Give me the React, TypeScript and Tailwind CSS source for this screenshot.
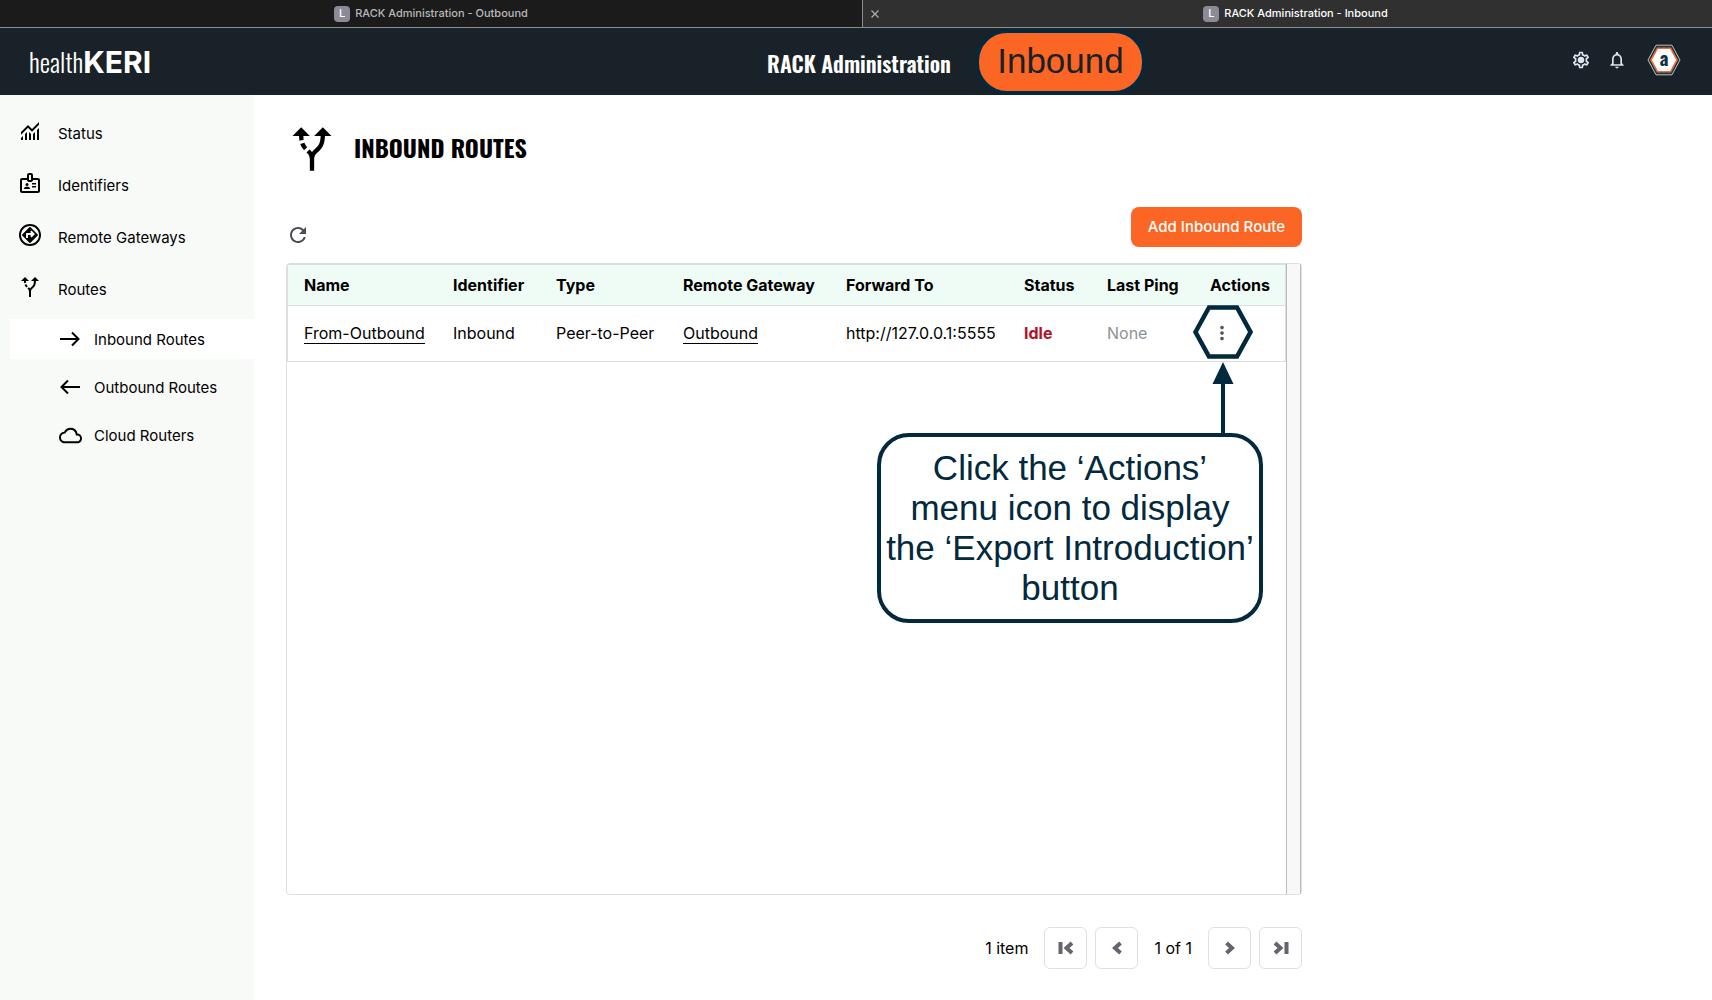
import type { ReactNode } from "react";
import {
  MdAltRoute,
  MdMoreVert,
  MdNotificationsNone,
  MdOutlineAssistantDirection,
  MdOutlineBadge,
  MdOutlineCloud,
  MdOutlineSettings,
  MdRefresh,
} from "react-icons/md";

const narrow = "font-['Oswald','Liberation_Sans_Narrow','Liberation_Sans',sans-serif]";

function TabLabel({ text }: { text: string }) {
  return (
    <span className="flex items-center gap-[5px]">
      <span className="flex h-4 w-4 items-center justify-center rounded bg-[#8b8a96] text-[11px] font-medium text-white">
        L
      </span>
      {text}
    </span>
  );
}

function BrowserTabs() {
  return (
    <div className="flex h-7 border-b border-[#8a8f91] bg-[#1b1b1b] text-[11px] font-medium" role="tablist">
      <button role="tab" aria-selected="false" className="flex w-[862px] shrink items-center justify-center text-[#b9b9b9]">
        <TabLabel text="RACK Administration - Outbound" />
      </button>
      <div className="flex flex-1 items-center border-l border-[#8a8f91] bg-[#303030]">
        <button aria-label="Close tab" className="ml-1 flex w-4 justify-center text-[#b0b0b0]">
          <svg width="8" height="8" viewBox="0 0 8 8" stroke="currentColor" strokeWidth="1.2">
            <path d="M.5.5l7 7M7.5.5l-7 7" />
          </svg>
        </button>
        <button role="tab" aria-selected="true" className="flex flex-1 justify-center pr-1 text-white">
          <TabLabel text="RACK Administration - Inbound" />
        </button>
      </div>
    </div>
  );
}

function SettingsIcon() {
  return (
    <svg width="20" height="20" viewBox="0 0 20 20">
      <MdOutlineSettings size={20} />
      <circle cx="10" cy="10" r="3" fill="currentColor" />
    </svg>
  );
}

function Avatar() {
  return (
    <svg width="34" height="32" viewBox="0 0 34 32">
      <path d="M1 16L9 1.200h16L33 16l-8 14.800H9z" fill="#26333a" stroke="#a9c9c0" strokeWidth="1" />
      <path d="M4 16L10.500 4.200h13L30 16l-6.500 11.800h-13z" fill="#fff" stroke="#f26a3c" strokeWidth="1.600" />
      <text x="17" y="22" textAnchor="middle" fontSize="19" fontWeight="700" fill="#12303f" fontFamily="Oswald, Liberation Sans Narrow, Liberation Sans, sans-serif">
        a
      </text>
    </svg>
  );
}

function Header() {
  return (
    <header className="flex h-[67px] items-center bg-[#1a2229] pr-[31px] pl-[29px] text-white">
      <a href="#home" className="flex flex-1 items-baseline leading-7">
        <span className={`${narrow} text-[26px] font-light`}>health</span>
        <span className="text-[30px] font-bold">KERI</span>
      </a>
      <div className="relative ml-2">
        <h1 className={`${narrow} pt-1 text-[22px] font-semibold`}>RACK Administration</h1>
        <span className="absolute top-1/2 left-full ml-6 flex h-[66px] w-[171px] -translate-y-1/2 items-center justify-center rounded-[32px] border-4 border-[#03293e] bg-[#fc6625] font-['Liberation_Sans',sans-serif] text-[35px] text-[#1a2229]">
          Inbound
        </span>
      </div>
      <div className="flex flex-1 items-center justify-end pb-[3px] text-[#dfe5ee]">
        <button aria-label="Settings" className="mr-4">
          <SettingsIcon />
        </button>
        <button aria-label="Notifications" className="mr-5">
          <MdNotificationsNone size={20} />
        </button>
        <button aria-label="Account">
          <Avatar />
        </button>
      </div>
    </header>
  );
}

function MonitoringIcon() {
  return (
    <svg width="24" height="24" viewBox="0 0 24 24" fill="currentColor">
      <path d="M3 21v-2l2-2v4zm4 0v-6l2-2v8zm4 0v-8l2 2.030V21zm4 0v-5.980l2-2V21zm4 0V11l2-2v12zM3 15.830V13l7-7 4 4 7-7v2.830l-7 7-4-4z" />
    </svg>
  );
}

function ArrowIcon({ left = false }: { left?: boolean }) {
  return (
    <svg width="22" height="16" viewBox="0 0 22 16" fill="none" stroke="currentColor" strokeWidth="2">
      {left ? <path d="M21 8H2.500M9 1.500L2.500 8 9 14.500" /> : <path d="M1 8h18.500M13 1.500L19.500 8 13 14.500" />}
    </svg>
  );
}

function NavItem({ icon, label }: { icon: ReactNode; label: string }) {
  return (
    <a href="#nav" className="flex h-[52px] items-center gap-4 pl-[18px]">
      <span className="flex w-6 justify-center pb-1">{icon}</span>
      <span className="pt-0.5">{label}</span>
    </a>
  );
}

function SubItem({ icon, label, active = false }: { icon: ReactNode; label: string; active?: boolean }) {
  return (
    <a
      href="#route"
      aria-current={active ? "page" : undefined}
      className={`ml-2.5 flex h-10 items-center gap-3 pl-12 ${active ? "bg-white" : ""}`}
    >
      <span className="flex w-6 justify-center">{icon}</span>
      <span className="pt-0.5">{label}</span>
    </a>
  );
}

function Sidebar() {
  return (
    <nav className="w-[254px] shrink-0 bg-[#f8faf8] pt-3 text-[15px]">
      <NavItem icon={<MonitoringIcon />} label="Status" />
      <NavItem icon={<MdOutlineBadge size={24} />} label="Identifiers" />
      <NavItem icon={<MdOutlineAssistantDirection size={24} />} label="Remote Gateways" />
      <NavItem icon={<MdAltRoute size={24} />} label="Routes" />
      <div className="flex flex-col gap-2 pt-1">
        <SubItem icon={<ArrowIcon />} label="Inbound Routes" active />
        <SubItem icon={<ArrowIcon left />} label="Outbound Routes" />
        <SubItem icon={<MdOutlineCloud size={23} />} label="Cloud Routers" />
      </div>
    </nav>
  );
}

const columns = [
  { label: "Name", width: "w-[149px]" },
  { label: "Identifier", width: "w-[103px]" },
  { label: "Type", width: "w-[127px]" },
  { label: "Remote Gateway", width: "w-[163px]" },
  { label: "Forward To", width: "w-[178px]" },
  { label: "Status", width: "w-[83px]" },
  { label: "Last Ping", width: "w-[103px]" },
  { label: "Actions", width: "w-[91px]" },
];

function RoutesTable() {
  return (
    <table className="w-full table-fixed border-collapse text-left whitespace-nowrap">
      <thead>
        <tr className="h-10 border-b border-[#dcdfe1] bg-[#effcf6]">
          {columns.map((c) => (
            <th key={c.label} scope="col" className={`${c.width} pl-4 font-bold`}>
              {c.label}
            </th>
          ))}
        </tr>
      </thead>
      <tbody>
        <tr className="h-14">
          <td className="pl-4">
            <a href="#route" className="border-b border-black">From-Outbound</a>
          </td>
          <td className="pl-4">Inbound</td>
          <td className="pl-4">Peer-to-Peer</td>
          <td className="pl-4">
            <a href="#gateway" className="border-b border-black">Outbound</a>
          </td>
          <td className="pl-4">http://127.0.0.1:5555</td>
          <td className="pl-4 font-bold text-[#b01227]">Idle</td>
          <td className="pl-4 text-[#8f8f98]">None</td>
          <td className="pl-4">
            <button aria-label="Actions" className="flex w-6 justify-center text-[#55555c]">
              <MdMoreVert size={22} />
            </button>
          </td>
        </tr>
      </tbody>
    </table>
  );
}

function Callout() {
  return (
    <div className="absolute top-[41px] right-[38px] flex w-[386px] flex-col items-end text-[#03293e]">
      <svg className="mr-[10px]" width="60" height="128" viewBox="0 0 60 128">
        <path d="M2.500 27L16 2.500h28L57.500 27 44 51.500H16z" fill="none" stroke="currentColor" strokeWidth="4.500" />
        <path d="M30 57L40.500 79h-8.500v49h-4V79h-8.500z" fill="currentColor" />
      </svg>
      <p className="w-full rounded-[32px] border-4 border-current bg-white pt-[11px] pb-[11px] text-center font-['Liberation_Sans',sans-serif] text-[35px] leading-10">
        Click the ‘Actions’
        <br />
        menu icon to display
        <br />
        <span className="whitespace-nowrap">the ‘Export Introduction’</span>
        <br />
        button
      </p>
    </div>
  );
}

function PagerButton({ label, path }: { label: string; path: string }) {
  return (
    <button
      aria-label={label}
      className="flex h-[42px] w-[43px] items-center justify-center rounded-md border border-[#dfe1e4] text-[#65656d]"
    >
      <svg width="16" height="14" viewBox="0 0 16 14" fill="none" stroke="currentColor" strokeWidth="4">
        <path d={path} />
      </svg>
    </button>
  );
}

function Pager() {
  return (
    <div className="mt-8 flex items-center justify-end gap-2">
      <span className="mr-2">1 item</span>
      <PagerButton label="First page" path="M2.500 1v12M14 2L8.500 7 14 12" />
      <PagerButton label="Previous page" path="M11.500 2L6 7l5.500 5" />
      <span className="mx-2">1 of 1</span>
      <PagerButton label="Next page" path="M4.500 2L10 7l-5.500 5" />
      <PagerButton label="Last page" path="M13.500 1v12M2 2l5.500 5L2 12" />
    </div>
  );
}

export default function App() {
  return (
    <div className="flex min-h-screen flex-col bg-white font-['Inter',sans-serif] text-base text-black">
      <BrowserTabs />
      <Header />
      <div className="flex flex-1">
        <Sidebar />
        <main className="flex min-w-0 flex-1 flex-col px-8 pt-7 pb-[31px]">
          <div className="flex w-full max-w-[1016px] flex-1 flex-col">
            <div className="flex items-center gap-4">
              <MdAltRoute size={52} />
              <h2 className={`${narrow} pb-1 text-2xl font-bold`}>INBOUND ROUTES</h2>
            </div>
            <div className="mt-8 flex items-end justify-between">
              <button aria-label="Refresh" className="text-[#4b4b52]">
                <MdRefresh size={24} />
              </button>
              <button className="h-10 rounded-lg bg-[#fc6625] px-[17px] text-[15px] font-medium text-white">
                Add Inbound Route
              </button>
            </div>
            <div className="relative mt-4 flex flex-1 rounded border border-[#dcdfe1]">
              <div className="flex-1 self-start border border-[#dcdfe1]">
                <RoutesTable />
              </div>
              <div className="w-[15px] border-x border-[#bcbcbc] bg-[#f8f8f8]" />
              <Callout />
            </div>
            <Pager />
          </div>
        </main>
      </div>
    </div>
  );
}
